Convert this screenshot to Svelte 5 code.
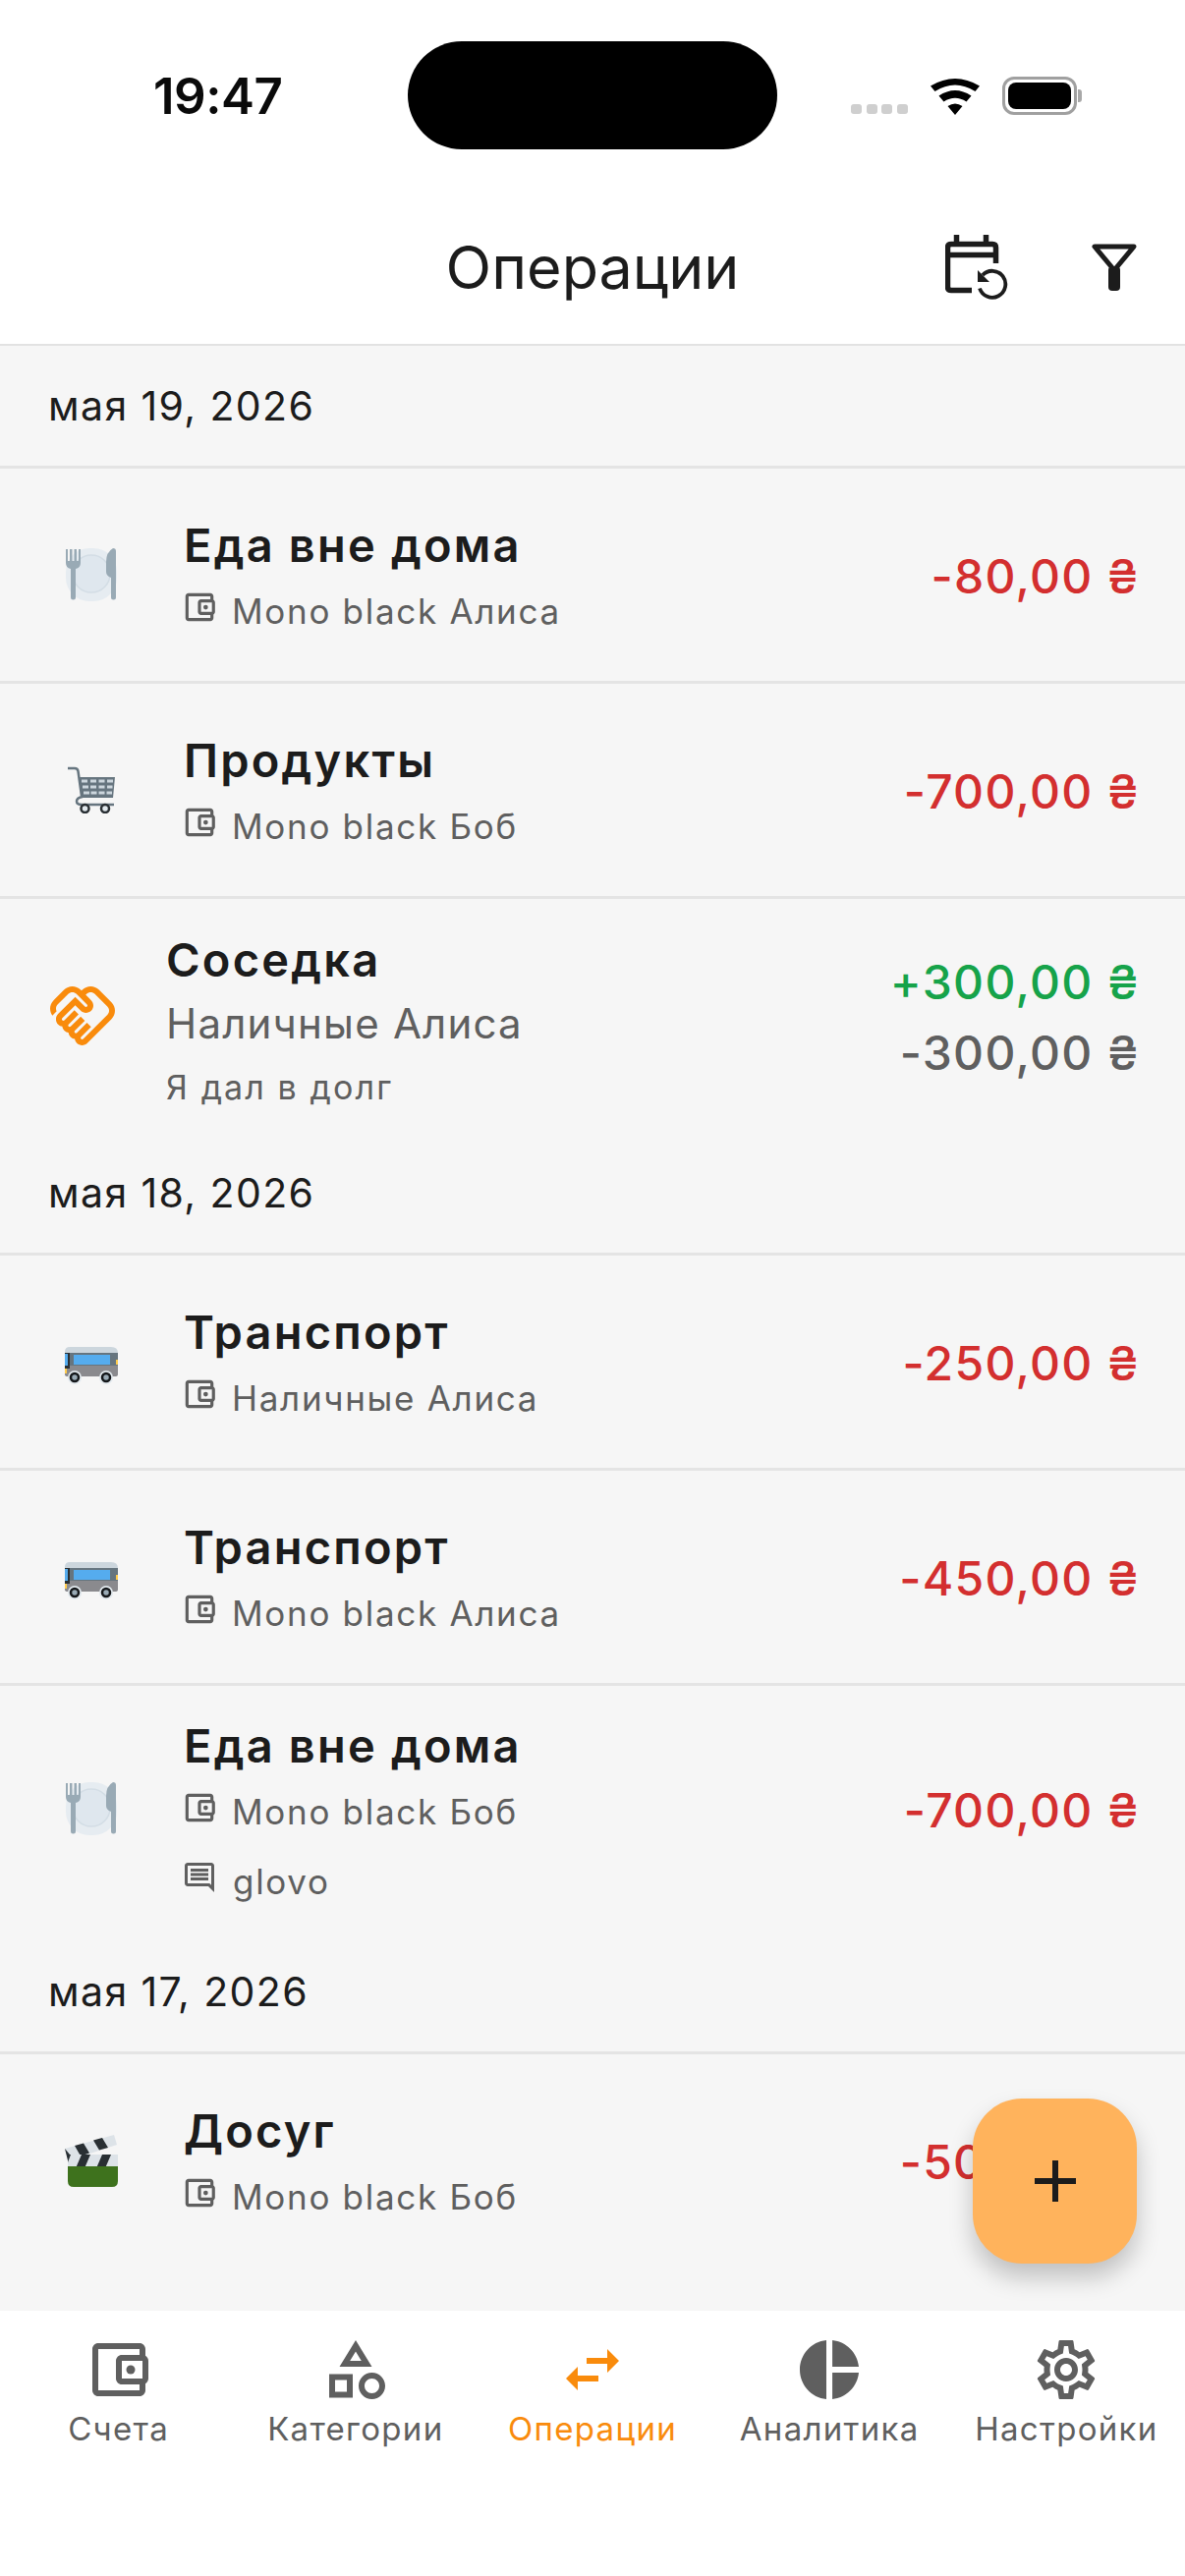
<script>
  const wallet = "M21 7.28V5c0-1.1-.9-2-2-2H5c-1.11 0-2 .9-2 2v14c0 1.1.89 2 2 2h14c1.1 0 2-.9 2-2v-2.28c.59-.35 1-.98 1-1.72V9c0-.74-.41-1.38-1-1.72zM20 9v6h-7V9h7zM5 19V5h14v2h-6c-1.1 0-2 .9-2 2v6c0 1.1.9 2 2 2h6v2H5z";
  const comment = "M21.99 4c0-1.1-.89-2-1.99-2H4c-1.1 0-2 .9-2 2v12c0 1.1.9 2 2 2h14l4 4-.01-18zM20 4v13.17L18.83 16H4V4h16zM6 12h12v2H6zm0-3h12v2H6zm0-3h12v2H6z";
  const handshake = "M12.22 19.85c-.18.18-.5.21-.71 0-.18-.18-.21-.5 0-.71l3.39-3.39-1.41-1.41-3.39 3.39c-.19.2-.51.19-.71 0-.21-.21-.18-.53 0-.71l3.39-3.39-1.41-1.41-3.39 3.39c-.18.18-.5.21-.71 0-.19-.19-.19-.51 0-.71l3.39-3.39-1.42-1.41-3.39 3.39c-.18.18-.5.21-.71 0-.19-.2-.19-.51 0-.71L9.52 8.4l1.87 1.86c.95.95 2.59.94 3.54 0 .98-.98.98-2.56 0-3.54l-1.86-1.86.28-.28c.78-.78 2.05-.78 2.83 0l4.24 4.24c.78.78.78 2.05 0 2.83l-8.2 8.2zm9.61-6.78c1.56-1.56 1.56-4.09 0-5.66l-4.24-4.24c-1.56-1.56-4.09-1.56-5.66 0l-.28.28-.28-.28c-1.56-1.56-4.09-1.56-5.66 0L2.17 6.71c-1.42 1.42-1.55 3.63-.4 5.19l1.45-1.45c-.39-.75-.26-1.7.37-2.33l3.54-3.54c.78-.78 2.05-.78 2.83 0l3.56 3.56c.18.18.21.5 0 .71-.21.21-.53.18-.71 0L9.52 5.57l-5.8 5.79c-.98.97-.98 2.56 0 3.54.39.39.89.63 1.42.7.07.52.3 1.02.7 1.42.4.4.9.63 1.42.7.07.52.3 1.02.7 1.42.4.4.9.63 1.42.7.07.54.31 1.03.7 1.42.47.47 1.1.73 1.77.73.67 0 1.3-.26 1.77-.73l8.21-8.19z";
  const groups = [
    { date: "мая 19, 2026", rows: [
      { icon: "plate", title: "Еда вне дома", account: "Mono black Алиса", amount: "-80,00 ₴" },
      { icon: "cart", title: "Продукты", account: "Mono black Боб", amount: "-700,00 ₴" },
      { debt: true, title: "Соседка", account: "Наличные Алиса", note: "Я дал в долг", plus: "+300,00 ₴", minus: "-300,00 ₴" }
    ]},
    { date: "мая 18, 2026", rows: [
      { icon: "bus", title: "Транспорт", account: "Наличные Алиса", amount: "-250,00 ₴" },
      { icon: "bus", title: "Транспорт", account: "Mono black Алиса", amount: "-450,00 ₴" },
      { icon: "plate", title: "Еда вне дома", account: "Mono black Боб", note: "glovo", amount: "-700,00 ₴" }
    ]},
    { date: "мая 17, 2026", rows: [
      { icon: "clapper", title: "Досуг", account: "Mono black Боб", amount: "-500,00 ₴" }
    ]},
    { date: "мая 16, 2026", rows: [] }
  ];
  const tabs = [
    { label: "Счета", d: wallet, dot: true },
    { label: "Категории", d: "M12 2l-5.5 9h11L12 2zm0 3.84L13.93 9h-3.87L12 5.84zM17.5 13c-2.49 0-4.5 2.01-4.5 4.5s2.01 4.5 4.5 4.5 4.5-2.01 4.5-4.5-2.01-4.5-4.5-4.5zm0 7c-1.38 0-2.5-1.12-2.5-2.5s1.12-2.5 2.5-2.5 2.5 1.12 2.5 2.5-1.12 2.5-2.5 2.5zM3 21.5h8v-8H3v8zm2-6h4v4H5v-4z" },
    { label: "Операции", d: "M6.99 11L3 15l3.99 4v-3H14v-2H6.99v-3zM21 9l-4-4v3H10v2h7v3l4-4z", active: true },
    { label: "Аналитика", d: "M11 2v20c-5.07-.5-9-4.79-9-10s3.93-9.5 9-10zm2.03 0v8.99H22c-.47-4.74-4.24-8.52-8.97-8.99zm0 11.01V22c4.74-.47 8.5-4.25 8.97-8.99h-8.97z" },
    { label: "Настройки", d: "M19.43 12.98c.04-.32.07-.64.07-.98 0-.34-.03-.66-.07-.98l2.11-1.65c.19-.15.24-.42.12-.64l-2-3.46c-.09-.16-.26-.25-.44-.25-.06 0-.12.01-.17.03l-2.49 1c-.52-.4-1.08-.73-1.69-.98l-.38-2.65C14.46 2.18 14.25 2 14 2h-4c-.25 0-.46.18-.49.42l-.38 2.65c-.61.25-1.17.59-1.69.98l-2.49-1c-.06-.02-.12-.03-.18-.03-.17 0-.34.09-.43.25l-2 3.46c-.13.22-.07.49.12.64l2.11 1.65c-.04.32-.07.65-.07.98 0 .33.03.66.07.98l-2.11 1.65c-.19.15-.24.42-.12.64l2 3.46c.09.16.26.25.44.25.06 0 .12-.01.17-.03l2.49-1c.52.4 1.08.73 1.69.98l.38 2.65c.03.24.24.42.49.42h4c.25 0 .46-.18.49-.42l.38-2.65c.61-.25 1.17-.59 1.69-.98l2.49 1c.06.02.12.03.18.03.17 0 .34-.09.43-.25l2-3.46c.12-.22.07-.49-.12-.64l-2.11-1.65zm-1.98-1.71c.04.31.05.52.05.73 0 .21-.02.43-.05.73l-.14 1.13.89.7 1.08.84-.7 1.21-1.27-.51-1.04-.42-.9.68c-.43.32-.84.56-1.25.73l-1.06.43-.16 1.13-.2 1.35h-1.4l-.19-1.35-.16-1.13-1.06-.43c-.43-.18-.83-.41-1.23-.71l-.91-.7-1.06.43-1.27.51-.7-1.21 1.08-.84.89-.7-.14-1.13c-.03-.31-.05-.54-.05-.74s.02-.43.05-.73l.14-1.13-.89-.7-1.08-.84.7-1.21 1.27.51 1.04.42.9-.68c.43-.32.84-.56 1.25-.73l1.06-.43.16-1.13.2-1.35h1.39l.19 1.35.16 1.13 1.06.43c.43.18.83.41 1.23.71l.91.7 1.06-.43 1.27-.51.7 1.21-1.07.85-.89.7.14 1.13zM12 8c-2.21 0-4 1.79-4 4s1.79 4 4 4 4-1.79 4-4-1.79-4-4-4zm0 6c-1.1 0-2-.9-2-2s.9-2 2-2 2 .9 2 2-.9 2-2 2z" }
  ];
</script>

{#snippet emoji(name)}
  {#if name === "plate"}
    <svg class="emoji" viewBox="0 0 54 54">
      <rect x="1" y="0" width="52" height="54" rx="24" fill="#E6ECF1"/>
      <circle cx="27" cy="26" r="19" fill="#DFE7EE" stroke="#D3DDE5" stroke-width="1.500"/>
      <path d="M1 1v14q0 5 5 6v29a2.500 2.500 0 0 0 5 0V21q5-1 5-6V1h-2v12h-2V1h-2.500v12h-2V1H5v12H3V1z" fill="#99AAB5"/>
      <path d="M42 50V14q0-10 7-14 3 0 3 3v47a2.500 2.500 0 0 1-5 0V30q-5-2-5-6z" fill="#99AAB5"/>
    </svg>
  {:else if name === "cart"}
    <svg class="emoji cart" viewBox="0 0 48 48">
      <path d="M0 2h7q3 0 3.500 3L14 30" fill="none" stroke="#66757F" stroke-width="2.500"/>
      <path d="M11 11h37l-2 21H14z" fill="#66757F"/>
      <path d="M14 13.500h6v3h-6zM23 13.500h6v3h-6zM31.500 13.500h6v3h-6zM40 13.500h6v3h-6zM15 19.500h6v3h-6zM23 19.500h6v3h-6zM31.500 19.500h6v3h-6zM40 19.500h5.500v3H40zM16 25.500h6v3h-6zM23.500 25.500h6v3h-6zM31.500 25.500h6v3h-6zM39.500 25.500h5.500v3h-5.500z" fill="#CCD6DD"/>
      <path d="M15 31q-6 1-6 4.500t5 3.500h33" fill="none" stroke="#66757F" stroke-width="2.500"/>
      <circle cx="17.500" cy="43" r="4" fill="#E1E8ED" stroke="#292F33" stroke-width="2.500"/>
      <circle cx="38" cy="43" r="4" fill="#E1E8ED" stroke="#292F33" stroke-width="2.500"/>
    </svg>
  {:else if name === "bus"}
    <svg class="emoji bus" viewBox="0 0 54 38">
      <path d="M5 0h42q7 0 7 6v2H0V5q0-5 5-5z" fill="#CCD6DD"/>
      <rect x="0" y="6" width="54" height="19" fill="#66757F"/>
      <path d="M0 19h54v9q0 2-3 2H3q-3 0-3-2z" fill="#8A8A8E"/>
      <rect x="9" y="8" width="37" height="10" fill="#55ACEE"/>
      <rect x="0" y="6" width="5" height="16" fill="#292F33"/>
      <rect x="0" y="7" width="3" height="12" fill="#55ACEE"/>
      <rect x="52" y="13" width="2" height="5" fill="#FFCC4D"/>
      <rect x="0" y="22" width="2" height="5" fill="#FFCC4D"/>
      <circle cx="10" cy="31" r="7" fill="#E1E8ED"/>
      <circle cx="42" cy="31" r="7" fill="#E1E8ED"/>
      <circle cx="10" cy="31" r="4" fill="#99AAB5" stroke="#14171A" stroke-width="2.500"/>
      <circle cx="42" cy="31" r="4" fill="#99AAB5" stroke="#14171A" stroke-width="2.500"/>
    </svg>
  {:else if name === "clapper"}
    <svg class="emoji clapper" viewBox="0 0 54 53">
      <path d="M0 14L50 0l3 10L4 26z" fill="#DDE3E8"/>
      <path d="M10 11l9-2.500 6 10-9 3zM29 5.500l9-2.500 6 10-9 2.500zM0 14l5 6-2 6z" fill="#292F33"/>
      <rect x="3" y="20" width="51" height="14" fill="#DDE3E8"/>
      <path d="M17 20h9l-6 14h-9zM38 20h9l-6 14h-9zM3 20h3l-3 8z" fill="#292F33"/>
      <path d="M3 32h51v15q0 6-6 6H9q-6 0-6-6z" fill="#3E721D"/>
    </svg>
  {/if}
{/snippet}

<div class="screen">
  <header class="header">
    <div class="status">
      <span class="time">19:47</span>
      <span class="island"></span>
      <span class="signal"><i></i><i></i><i></i><i></i></span>
      <svg class="wifi" viewBox="0 0 50 37">
        <path d="M25 37l-7.500-9q7.500-5 15 0zM13.500 23.500L8.500 17.500q16.500-11 33 0l-5 6q-11.500-7.500-23 0zM4.500 13L0 7.500q25-15 50 0L45.500 13Q25 0 4.500 13z" fill="#000"/>
      </svg>
      <span class="battery"><span class="level"></span></span>
    </div>
    <div class="bar">
      <h1 class="title">Операции</h1>
      <div class="actions">
        <svg class="calendar" viewBox="0 0 64 66">
          <path d="M27 56.500H6q-3.500 0-3.500-3.500V13q0-3.500 3.500-3.500h42q3.500 0 3.500 3.500v16M3 20.500h48M11.500 0v9M41.500 0v9" fill="none" stroke="#1c1c1c" stroke-width="5.500"/>
          <path d="M35 54.500A13.500 13.500 0 1 0 38 41" fill="none" stroke="#1c1c1c" stroke-width="3.800"/>
          <path d="M33 36v12h12z" fill="#1c1c1c"/>
        </svg>
        <svg class="filter" viewBox="0 0 46 48">
          <path d="M3 3h40L23 27z" fill="none" stroke="#1c1c1c" stroke-width="5" stroke-linejoin="round"/>
          <rect x="17" y="23" width="12" height="25" rx="4" fill="#1c1c1c"/>
        </svg>
      </div>
    </div>
  </header>

  <main class="list">
    {#each groups as g}
      <div class="date">{g.date}</div>
      {#each g.rows as r, i}
        {#if r.debt}
          <div class="row debt">
            <svg class="shake" viewBox="0 0 24 24"><path d={handshake} fill="#F98B0C"/></svg>
            <div class="text">
              <div class="name">{r.title}</div>
              <div class="acc">{r.account}</div>
              <div class="memo">{r.note}</div>
            </div>
            <div class="sums">
              <div class="sum green">{r.plus}</div>
              <div class="sum grey">{r.minus}</div>
            </div>
          </div>
        {:else}
          <div class="row" class:noted={r.note} class:ruled={i < g.rows.length - 1} class:single={g.rows.length === 1}>
            {@render emoji(r.icon)}
            <div class="text">
              <div class="name">{r.title}</div>
              <div class="line">
                <svg class="mini" viewBox="0 0 24 24"><path d={wallet} fill="#5f5f5f"/><circle cx="16" cy="12" r="1.500" fill="#5f5f5f"/></svg>
                <span>{r.account}</span>
              </div>
              {#if r.note}
                <div class="line note">
                  <svg class="mini chat" viewBox="0 0 24 24"><path d={comment} fill="#5f5f5f"/></svg>
                  <span>{r.note}</span>
                </div>
              {/if}
            </div>
            <div class="sum red">{r.amount}</div>
          </div>
        {/if}
      {/each}
    {/each}
  </main>

  <button class="fab" aria-label="Добавить">
    <svg viewBox="0 0 42 42"><path d="M21 0v42M0 21h42" stroke="#1c1c1c" stroke-width="6"/></svg>
  </button>

  <nav class="nav">
    {#each tabs as t}
      <div class="tab" class:active={t.active}>
        <svg class="tabicon" viewBox="0 0 24 24">
          <path d={t.d} fill="currentColor"/>
          {#if t.dot}<circle cx="16" cy="12" r="1.500" fill="currentColor"/>{/if}
        </svg>
        <span>{t.label}</span>
      </div>
    {/each}
  </nav>
</div>

<style>
  :global(body) { margin: 0; background: #fff; }
  .screen {
    position: relative;
    width: 1206px;
    height: 2622px;
    display: flex;
    flex-direction: column;
    overflow: hidden;
    background: #fff;
    font-family: Inter, "Noto Sans", sans-serif;
    color: #1c1c1c;
  }
  .header { height: 352px; flex: none; box-sizing: border-box; border-bottom: 2px solid #e2e2e2; background: #fff; }
  .status { height: 194px; display: flex; align-items: center; padding-left: 156px; box-sizing: border-box; }
  .time { width: 259px; flex: none; font-size: 51px; font-weight: 600; color: #0a0a0a; letter-spacing: -0.5px; }
  .island { width: 376px; height: 110px; flex: none; border-radius: 55px; background: #000; }
  .signal { margin-left: 75px; width: 58px; display: flex; justify-content: space-between; align-self: flex-end; margin-bottom: 78px; }
  .signal i { width: 11px; height: 10px; border-radius: 3px; background: #cfcfcf; }
  .wifi { width: 50px; height: 37px; margin-left: 23px; margin-top: 2px; }
  .battery { width: 76px; height: 39px; margin-left: 23px; box-sizing: border-box; border: 3px solid #a0a0a0; border-radius: 12px; padding: 3px; position: relative; }
  .battery::after { content: ""; position: absolute; right: -8px; top: 10px; width: 4px; height: 13px; border-radius: 0 3px 3px 0; background: #a8a8a8; }
  .level { display: block; width: 100%; height: 100%; background: #000; border-radius: 8px; }
  .bar { height: 156px; display: grid; grid-template-columns: 1fr auto 1fr; align-items: center; }
  .title { grid-column: 2; margin: 0; font-size: 61px; font-weight: 400; line-height: 1; color: #1c1c1c; }
  .actions { grid-column: 3; display: flex; align-items: center; justify-content: flex-end; padding-right: 49px; gap: 85px; }
  .calendar { width: 64px; height: 66px; }
  .filter { width: 46px; height: 48px; }

  .list { flex: 1; min-height: 0; overflow: hidden; background: #f6f6f6; }
  .date { height: 122px; box-sizing: content-box; border-bottom: 3px solid #e4e4e4; padding-left: 49px; display: flex; align-items: center; font-size: 41px; letter-spacing: 1.4px; color: #1c1c1c; }
  .date { line-height: 1; padding-top: 0; }
  .row { display: flex; align-items: center; height: 219px; box-sizing: border-box; padding: 0 46px 0 66px; }
  .ruled { border-bottom: 3px solid #e4e4e4; }
  .noted { height: 250px; }
  .debt { height: 238px; padding-left: 52px; }
  .single { height: 217px; }
  .emoji { width: 54px; height: 54px; flex: none; margin-right: 67px; }
  .cart { width: 48px; height: 48px; margin-left: 3px; margin-right: 70px; }
  .bus { height: 38px; margin-top: 8px; }
  .clapper { height: 53px; }
  .shake { width: 72px; height: 72px; flex: none; margin-left: -4px; margin-right: 49px; }
  .text { flex: 1; min-width: 0; align-self: flex-start; padding-top: 46px; }
  .noted .text, .debt .text { padding-top: 29px; }
  .name { font-size: 47px; line-height: 64px; font-weight: 600; letter-spacing: 2.2px; color: #1c1c1c; }
  .line { display: flex; align-items: center; height: 70px; font-size: 35px; letter-spacing: 1.7px; color: #5f5f5f; }
  .note { height: 72px; }
  .mini { width: 38px; height: 38px; flex: none; margin: -8px 14px 0 -3px; }
  .chat { width: 36px; height: 36px; margin: -8px 16px 0 -2px; }
  .debt .name { line-height: 65px; }
  .acc { font-size: 42px; line-height: 65px; letter-spacing: 1.2px; color: #5f5f5f; }
  .memo { font-size: 34px; line-height: 65px; letter-spacing: 2.1px; color: #5f5f5f; }
  .sums { margin-top: 4px; }
  .sum { font-size: 48px; line-height: 72px; font-weight: 500; letter-spacing: 1.3px; text-align: right; white-space: nowrap; }
  .red { margin-top: 3px; color: #d32f2f; }
  .green { color: #16a34a; }
  .grey { color: #5f5f5f; }

  .fab {
    position: absolute;
    left: 990px;
    top: 2136px;
    width: 167px;
    height: 168px;
    border: 0;
    padding: 0;
    border-radius: 50px;
    background: #ffb35c;
    box-shadow: 0 14px 24px rgba(0, 0, 0, 0.22);
    display: flex;
    align-items: center;
    justify-content: center;
  }
  .fab svg { width: 42px; height: 42px; }

  .nav { height: 270px; flex: none; display: grid; grid-template-columns: repeat(5, 1fr); background: #fff; position: relative; align-items: start; padding-top: 24px; box-sizing: border-box; }
  .tab { display: flex; flex-direction: column; align-items: center; color: #5f5f5f; font-size: 33px; letter-spacing: 1.3px; white-space: nowrap; }
  .tab span { line-height: 44px; margin-top: 2px; }
  .tabicon { width: 72px; height: 72px; }
  .active { color: #f98b0c; }
</style>
